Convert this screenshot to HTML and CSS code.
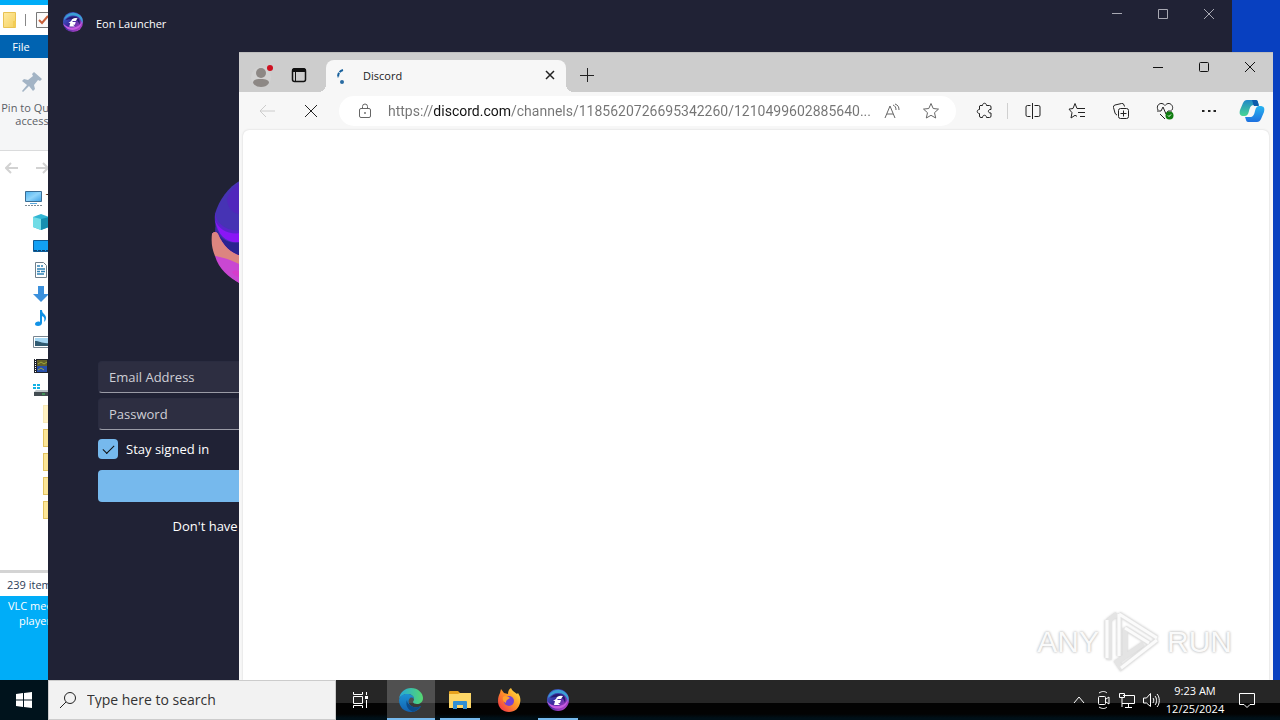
FILE: index.html
```html
<!DOCTYPE html>
<html lang="en">
<head>
    <meta charset="UTF-8">
    <meta name="viewport" content="width=device-width, initial-scale=1.0">
    <title>Desktop</title>
    <link rel="stylesheet" href="styles.css">
</head>
<body>
    <!-- shared gradients and the Eon logo -->
    <svg class="defs" width="0" height="0" aria-hidden="true">
        <defs>
            <linearGradient id="folder" x1="0" y1="0" x2="1" y2="1">
                <stop offset="0" stop-color="#ffeaa0"/><stop offset="1" stop-color="#f5d160"/>
            </linearGradient>
            <linearGradient id="screen" x1="0" y1="0" x2="1" y2="1">
                <stop offset="0" stop-color="#4fb4f0"/><stop offset="0.5" stop-color="#8fd4fa"/><stop offset="1" stop-color="#3ba0e6"/>
            </linearGradient>
            <linearGradient id="eon-ring" x1="0" y1="0" x2="1" y2="1">
                <stop offset="0" stop-color="#3f7fe0"/><stop offset="0.45" stop-color="#3a2a9c"/><stop offset="1" stop-color="#d84bd8"/>
            </linearGradient>
            <symbol id="eon" viewBox="0 0 24 24">
                <circle cx="12" cy="12" r="11" fill="url(#eon-ring)"/>
                <path d="M2 10C4 2 14-1 20 5c3 3 3 6 2 9-1-6-5-9-10-9-4 0-7 2-10 5z" fill="#3a9fd4"/>
                <path d="M1 13c2 6 8 9 14 7 4-1 7-5 7-9-2 5-6 7-10 7s-8-1-11-5z" fill="#c65be0"/>
                <path d="M4 10c3-4 8-5 12-3 3 1 4 4 3 8-1-4-3-6-7-6-3 0-6 0-8 1z" fill="#241a70"/>
                <path d="M8 17l1-4H7l3-2 1-2q3-2 6-1l-2 3h-3l-1 1h4l-1 3h-2l2 2z" fill="#fff"/>
            </symbol>
        </defs>
    </svg>

    <main class="desktop">
        <div class="shortcut">VLC media player</div>

        <!-- File Explorer -->
        <section class="window explorer" aria-label="File Explorer">
            <div class="explorer-title">
                <svg width="14" height="16" viewBox="0 0 14 16"><path d="M.5.5h12v15h-12z" fill="url(#folder)" stroke="#e8c252"/><path d="M10 9h3v6h-3z" fill="#f2cc55"/></svg>
                <span class="divider"></span>
                <svg width="16" height="16" viewBox="0 0 16 16"><path d="M.5.5h14v15H.5z" fill="#fafafa" stroke="#777"/><path d="M3 8l3 3 6-7" fill="none" stroke="#c8603a" stroke-width="2"/></svg>
            </div>
            <div class="explorer-tabs"><button class="file-tab">File</button></div>
            <div class="ribbon">
                <button class="pin-button">
                    <svg width="22" height="22" viewBox="0 0 22 22"><path d="M13 1l8 7-2 2-2-1-4 5 1 4-2 2-4-5-6 6-1-1 5-6-5-4 2-2 4 1 5-4-1-2z" fill="#a3b4c5"/></svg>
                    Pin to Quick access
                </button>
            </div>
            <div class="explorer-nav">
                <svg width="14" height="12" viewBox="0 0 14 12"><path d="M13 6H2M6 1L1 6l5 5" fill="none" stroke="#d2d2d2" stroke-width="2"/></svg>
                <svg width="14" height="12" viewBox="0 0 14 12"><path d="M1 6h11M8 1l5 5-5 5" fill="none" stroke="#d2d2d2" stroke-width="2"/></svg>
            </div>
            <ul class="tree">
                <li class="root"><svg width="17" height="16" viewBox="0 0 17 16"><path d="M.5 1.500h16v10H.5z" fill="url(#screen)" stroke="#3a6d94"/><path d="M5 13.500h7" stroke="#58a8de"/><path d="M0 15.500h17" stroke="#7d8a94" stroke-dasharray="2 1"/></svg>This PC</li>
                <li><svg width="16" height="16" viewBox="0 0 16 16"><path d="M0 3l8-3 8 3v10l-8 3-8-3z" fill="#31b5d3"/><path d="M0 3l8 2v11l-8-3z" fill="#71dce6"/><path d="M8 5l8-2v10l-8 3z" fill="#168fb0"/></svg></li>
                <li><svg width="18" height="12" viewBox="0 0 18 12"><path d="M.5.5h17v11H.5z" fill="#12a0f4" stroke="#0e5b95"/><path d="M1 10.500h14" stroke="#0d4474" stroke-dasharray="3 1"/></svg></li>
                <li><svg width="16" height="16" viewBox="0 0 16 16"><path d="M2.500.5h8l3 3v12h-11z" fill="#fff" stroke="#70808c"/><path d="M4 4h3m1 0h2M4 7h8M4 9.500h3m1 0h4M4 12h7" stroke="#2f82b6" stroke-width="1.500"/></svg></li>
                <li><svg width="16" height="16" viewBox="0 0 16 16"><path d="M5 0h6v8h5l-8 8-8-8h5z" fill="#3b90dc"/></svg></li>
                <li><svg width="16" height="16" viewBox="0 0 16 16"><path d="M7 0h2c0 4 4 4 4 8 0 2-1 3-2 4 1-4 0-5-2-6v7c0 2-2 3-4 3s-3-1-3-2c0-2 3-3 5-2z" fill="#1192e6"/></svg></li>
                <li><svg width="18" height="12" viewBox="0 0 18 12"><path d="M.5.5h17v11H.5z" fill="#fff" stroke="#788590"/><path d="M2 2h15v8H2z" fill="#a7d8f4"/><path d="M2 5c5 0 7 3 15 2v3H2z" fill="#315b72"/></svg></li>
                <li><svg width="16" height="16" viewBox="0 0 16 16"><path d="M1 1h15v14H1z" fill="#20242c"/><path d="M4 2h10v6H4z" fill="#63612a"/><path d="M4 8h10v6H4z" fill="#2850ac"/><path d="M2.500 1v14" stroke="#fff" stroke-dasharray="1 1"/><path d="M5 6l3-2 3 2 3-2M5 12l3-2 3 2" stroke="#a0a83a" fill="none"/></svg></li>
                <li><svg width="18" height="16" viewBox="0 0 18 16"><path d="M0 2h3v2H0zM4 2h3v2H4zM0 5h3v2H0zM4 5h3v2H4z" fill="#14b2e4"/><path d="M3 8h15v2H1z" fill="#bfc5c9"/><path d="M1 10h17v4H1z" fill="#434c52"/><path d="M9 12h3" stroke="#3cd35a"/></svg></li>
                <li class="folder pale"></li>
                <li class="folder"></li>
                <li class="folder"></li>
                <li class="folder"></li>
                <li class="folder"></li>
            </ul>
            <div class="explorer-status">239 items</div>
        </section>

        <!-- Eon Launcher -->
        <section class="window launcher" aria-label="Eon Launcher">
            <header class="launcher-title">
                <svg width="22" height="22"><use href="#eon"/></svg>
                <span class="launcher-name">Eon Launcher</span>
                <div class="window-buttons">
                    <button aria-label="Minimize"><svg width="12" height="12" viewBox="0 0 12 12"><path d="M1 5.500h10"/></svg></button>
                    <button aria-label="Maximize"><svg width="12" height="12" viewBox="0 0 12 12"><path d="M1.500 1.500h9v9h-9z"/></svg></button>
                    <button aria-label="Close"><svg width="12" height="12" viewBox="0 0 12 12"><path d="M1 1l10 10M11 1L1 11"/></svg></button>
                </div>
            </header>
            <form class="login">
                <svg class="logo" width="112" height="112" viewBox="0 0 112 112">
                    <circle cx="56" cy="55" r="52" fill="#3c2a9e"/>
                    <path d="M4 36C8 22 17 9 30 2v66C12 66 2 52 4 36z" fill="#4633b4"/>
                    <path d="M4 32c0 14 12 22 26 20v12C14 66 3 52 4 32z" fill="#5a24cc"/>
                    <path d="M16 20c0 10 6 16 14 16V4c-6 3-11 9-14 16z" fill="#5126bc"/>
                    <path d="M4 42c4 10 14 15 26 13v9C16 66 7 58 4 42z" fill="#8a16f6"/>
                    <path d="M8 58c7 6 14 8 22 6v18C20 77 12 68 8 58z" fill="#2a2390"/>
                    <path d="M1 56c2-3 5-2 6 0 5 12 13 19 23 22v28C12 96 0 78 1 56z" fill="#d63ccb"/>
                    <path d="M1 56c2-3 5-2 6 0 5 12 13 19 23 22v10C18 82 9 80 4 78 1 71 0 64 1 56z" fill="#dc8580"/>
                    <path d="M4 78c7 1 17 4 26 9v8c-4-4-7-3-9-1 2 4 5 4 9 6v6C17 99 8 91 4 78z" fill="#c947d2"/>
                </svg>
                <input class="field" type="email" aria-label="Email Address" placeholder="Email Address">
                <input class="field" type="password" aria-label="Password" placeholder="Password">
                <label class="stay" for="stay"><input type="checkbox" id="stay" checked>Stay signed in</label>
                <button class="login-button" type="button">Login</button>
                <p class="signup">Don't have an account? Sign up</p>
            </form>
        </section>

        <!-- Edge -->
        <section class="window browser" aria-label="Discord - Microsoft Edge">
            <header class="tab-strip">
                <button class="profile" aria-label="Profile"><svg width="24" height="24" viewBox="0 0 24 24"><circle cx="10" cy="14" r="10" fill="#d2d2d2"/><circle cx="10" cy="10" r="5" fill="#8d8885"/><path d="M2 20c0-3 3-4 8-4s8 1 8 4c-2 3-5 4-8 4s-6-1-8-4z" fill="#8d8885"/><circle cx="19" cy="5" r="3" fill="#cf1020"/></svg></button>
                <button class="workspaces" aria-label="Tab actions"><svg width="16" height="16" viewBox="0 0 16 16"><rect x="1.500" y="2" width="13" height="12.500" rx="2" fill="none" stroke="#111" stroke-width="1.500"/><path d="M1 5V3c0-1 1-2 2-2h10c1 0 2 1 2 2v2z" fill="#111"/><path d="M4.500 5v9" stroke="#111"/></svg></button>
                <div class="tab">
                    <svg width="16" height="16" viewBox="0 0 16 16"><path d="M9 2C5 3 4 6 4 10" fill="none" stroke="#17609c" stroke-width="2" stroke-dasharray="4 1"/><circle cx="8" cy="14" r="2" fill="#2a6ca3"/></svg>
                    <span class="tab-title">Discord</span>
                    <button class="tab-close" aria-label="Close tab"><svg width="10" height="10" viewBox="0 0 10 10"><path d="M1 1l8 8M9 1L1 9" stroke="#222" stroke-width="1.500"/></svg></button>
                </div>
                <button class="new-tab" aria-label="New tab"><svg width="14" height="14" viewBox="0 0 14 14"><path d="M7.500 0v14M0 7.500h14" stroke="#222"/></svg></button>
                <div class="window-buttons dark">
                    <button aria-label="Minimize"><svg width="12" height="12" viewBox="0 0 12 12"><path d="M1 6.500h10"/></svg></button>
                    <button aria-label="Maximize"><svg width="12" height="12" viewBox="0 0 12 12"><rect x="1.500" y="1.500" width="9" height="9" rx="1"/></svg></button>
                    <button aria-label="Close"><svg width="12" height="12" viewBox="0 0 12 12"><path d="M1 1l10 10M11 1L1 11"/></svg></button>
                </div>
            </header>
            <div class="toolbar">
                <button class="tool" aria-label="Back"><svg class="faded" width="16" height="16" viewBox="0 0 16 16"><path d="M16 8H1M7 2L1 8l6 6"/></svg></button>
                <button class="tool" aria-label="Stop"><svg width="14" height="14" viewBox="0 0 14 14"><path d="M1 1l12 12M13 1L1 13"/></svg></button>
                <div class="address">
                    <svg width="14" height="16" viewBox="0 0 14 16"><rect x="1.500" y="5.500" width="11" height="9" rx="1.500"/><path d="M4.500 5.500V3.500a2.500 2.500 0 0 1 5 0v2"/><circle cx="7" cy="10" r=".6"/></svg>
                    <input class="url" type="text" aria-label="Address" value="https://discord.com/channels/1185620726695342260/1210499602885640...">
                    <svg width="18" height="16" viewBox="0 0 18 16"><path d="M2 15L7 3l5 12M4 11h6M10 2c2 1 3 2 3 5M12 1c3 1 4 3 4 6"/></svg>
                    <svg width="18" height="18" viewBox="0 0 18 18"><path d="M9 1.500l2.200 5 5.300.6-4 3.600 1.200 5.300L9 13.300 4.300 16l1.200-5.300-4-3.600 5.300-.6z"/></svg>
                </div>
                <button class="tool" aria-label="Extensions"><svg width="18" height="18" viewBox="0 0 18 18"><path d="M4 3.500h2.500c0-3 4-3 4 0h3q1.500 0 1.500 1.500v2.500c-3.500-.5-3.500 4 0 3.500V14q0 1.500-1.500 1.500h-3c0-3-4-3-4 0H5q-1.500 0-1.500-1.500v-2.500c-3 0-3-4 0-4V4z"/></svg></button>
                <span class="tool-divider"></span>
                <button class="tool" aria-label="Split screen"><svg width="18" height="18" viewBox="0 0 18 18"><path d="M6.500 3.500h-3q-1.500 0-1.500 1.500v8q0 1.500 1.500 1.500h3M10.500 3.500h4q1.500 0 1.500 1.500v8q0 1.500-1.500 1.500h-4M8.500 1v16"/></svg></button>
                <button class="tool" aria-label="Favorites"><svg width="18" height="18" viewBox="0 0 18 18"><path d="M9 6.500L7 1.500l-2 5-4 .6 3 3.600-1 5.300 4-2.700 2 1M9 6.500h8M10 10.500h7M12 14.500h5"/></svg></button>
                <button class="tool" aria-label="Collections"><svg width="18" height="18" viewBox="0 0 18 18"><rect x="6.500" y="6.500" width="10" height="10" rx="2"/><path d="M11.500 8.500v6M8.500 11.500h6M5 13q-1.500-.5-2-2L1.500 5.500q-.5-2 1.500-2.500l6.500-1.500q2-.5 2.500 1.500l.5 1.500"/></svg></button>
                <button class="tool" aria-label="Browser essentials"><svg width="18" height="18" viewBox="0 0 18 18"><path d="M2 8C0 4 3 1 6 1.500c2 .5 3 2 3 2s1-1.500 3-2c3-.5 6 3 4 6.500M1 9h4l2-4 3 7 2-3h4M4 12l5 5"/><circle class="badge" cx="13.500" cy="13.500" r="4"/><path class="badge-tick" d="M12 13.500l1 1 2-2"/></svg></button>
                <button class="tool" aria-label="Settings and more"><svg width="16" height="16" viewBox="0 0 16 16"><path d="M1 8h2.500M7 8h2.500M12.500 8H15" stroke-width="2"/></svg></button>
                <button class="copilot" aria-label="Copilot">
                    <svg width="26" height="24" viewBox="0 0 26 24">
                        <defs>
                            <linearGradient id="cp1" x1="0" y1="0" x2="0" y2="1"><stop offset="0" stop-color="#2187c8"/><stop offset="1" stop-color="#47d694"/></linearGradient>
                            <linearGradient id="cp2" x1="0" y1="0" x2="0" y2="1"><stop offset="0" stop-color="#28b4f0"/><stop offset="1" stop-color="#1e70df"/></linearGradient>
                        </defs>
                        <path d="M8 1h9c2 0 2 3 3 5h-5c-3 0-4 2-5 6-1 4-2 5-5 5-4 0-5-2-4-6l3-7c1-2 2-3 4-3z" fill="url(#cp1)"/>
                        <path d="M18 23H9c-2 0-2-3-3-5h5c3 0 4-2 5-6 1-4 2-5 5-5 4 0 5 2 4 6l-3 7c-1 2-2 3-4 3z" fill="url(#cp2)"/>
                        <path d="M13 1h4c2 0 2 3 3 6h-5c-1-1-1-4-2-6z" fill="#0d5cac"/>
                    </svg>
                </button>
            </div>
            <div class="page"></div>
        </section>

        <div class="watermark">
            <span>ANY</span>
            <svg width="60" height="64" viewBox="0 0 60 64"><path d="M16 4v42M4 10v38M16 4l38 24M22 18l24 15M6 50V10l8-6M54 30L18 58l-4-6 26-18M22 18v28" fill="none" stroke="#e4e4e4" stroke-width="5"/><path d="M16 4v42M4 10v38M16 4l38 24M22 18l24 15M54 30L18 58" fill="none" stroke="#fbfbfb" stroke-width="3"/></svg>
            <span>RUN</span>
        </div>
    </main>

    <footer class="taskbar">
        <button class="start" aria-label="Start"><svg width="16" height="16" viewBox="0 0 16 16"><path d="M0 2l7-1v6.500H0zM8 1l8-1v7.500H8zM0 8.500h7V15l-7-1zM8 8.500h8V16l-8-1z" fill="#fff"/></svg></button>
        <div class="search">
            <svg width="18" height="18" viewBox="0 0 18 18"><circle cx="11" cy="7" r="5.500"/><path d="M7 11l-6 6"/></svg>
            <input type="text" aria-label="Search" placeholder="Type here to search">
        </div>
        <nav class="apps">
            <button class="task-view" aria-label="Task View"><svg width="18" height="18" viewBox="0 0 18 18" fill="none" stroke="#fff"><path d="M2.500 1v2.500h9V1M2.500 5.500h9v7h-9zM2.500 17v-2.500h9V17M15.500 1v3M15.500 9v8"/><path d="M14 5h3v3h-3z" fill="#fff" stroke="none"/></svg></button>
            <button class="running active" aria-label="Microsoft Edge">
                <svg width="24" height="24" viewBox="0 0 24 24">
                    <defs>
                        <linearGradient id="edge1"><stop offset="0" stop-color="#23a8dc"/><stop offset="1" stop-color="#55d870"/></linearGradient>
                        <linearGradient id="edge2" x1="0" y1="0" x2="0" y2="1"><stop offset="0" stop-color="#1c93d4"/><stop offset="1" stop-color="#1261b0"/></linearGradient>
                    </defs>
                    <path d="M0 11C1 4 6 0 12 0c7 0 12 5 12 10 0 4-3 6-6 6-2 0-4-1-4-2 0-1 1-1 1-3 0-3-3-5-6-5-4 0-8 2-9 5z" fill="url(#edge1)"/>
                    <path d="M0 12c1-4 4-6 8-6 4 0 7 2 7 5-1-1-2-2-4-1-2 2-2 5 0 7 3 3 7 3 11 1-2 4-6 6-10 6C5 24 0 19 0 12z" fill="url(#edge2)"/>
                    <path d="M8 12c-2 5 1 10 6 12 3-1 6-3 8-6-4 2-8 2-11-1-2-1-3-3-3-5z" fill="#0d4b88"/>
                </svg>
            </button>
            <button class="running" aria-label="File Explorer"><svg width="22" height="18" viewBox="0 0 22 18"><path d="M0 1q0-1 1-1h8l2 2h10q1 0 1 1v14H0z" fill="#e6a21e"/><path d="M0 3h9l2-1h11v15H0z" fill="#fcd667"/><path d="M4 18v-7q0-1 1-1h12q1 0 1 1v7h-4v-4H8v4z" fill="#2f8fd3"/></svg></button>
            <button aria-label="Firefox">
                <svg width="24" height="24" viewBox="0 0 24 24">
                    <defs><linearGradient id="fox" x1="1" y1="0" x2="0" y2="1"><stop offset="0" stop-color="#fff04a"/><stop offset="0.45" stop-color="#ff9826"/><stop offset="1" stop-color="#f0244e"/></linearGradient></defs>
                    <path d="M3 5l1-4 3 4 4 1c0-3 1-5 3-6 1 3 4 4 6 6l1-1c2 3 3 6 2 10-1 5-5 9-11 9S1 20 1 13c0-4 1-6 2-8z" fill="url(#fox)"/>
                    <circle cx="12" cy="13" r="5" fill="#7442d2"/>
                    <path d="M6 9c2-2 5-1 7 1l-3 2c-1 1-1 2-1 3-2-1-4-3-3-6z" fill="#ffa02d"/>
                </svg>
            </button>
            <button class="running" aria-label="Eon Launcher"><svg width="24" height="24"><use href="#eon"/></svg></button>
        </nav>
        <div class="tray">
            <svg width="24" height="18" viewBox="0 0 24 18"><path d="M7 12l5-6 5 6"/></svg>
            <svg width="24" height="18" viewBox="0 0 24 18"><rect x="7.500" y="5.500" width="7" height="8" rx="1"/><path d="M15 8l3-2v7l-3-2M8 2c3-2 6-2 8 0M8 16c3 2 6 2 8 0"/></svg>
            <svg width="24" height="18" viewBox="0 0 24 18"><path d="M8 4.500h11.500v8H7M13.500 12.500v4M10 16.500h7M4.500 2.500h5v4h-5zM7 7v9"/></svg>
            <svg width="24" height="18" viewBox="0 0 24 18"><path d="M4.500 7v5h3l4 3.500v-13L7.500 7zM14 7c1 1 1 3 0 5M16 5c2 2 2 7 0 9M18 3c3 3 3 10 0 13"/></svg>
            <div class="clock"><span>9:23 AM</span><span>12/25/2024</span></div>
            <button aria-label="Notifications"><svg width="18" height="18" viewBox="0 0 18 18"><path d="M1.500 2.500h15v11H12l-3 3-3-3H1.500z"/></svg></button>
        </div>
    </footer>
</body>
</html>
```
FILE: styles.css
```css
* {
    box-sizing: border-box;
}

body {
    margin: 0;
    height: 100vh;
    display: flex;
    flex-direction: column;
    overflow: hidden;
    font-family: "Open Sans", "Noto Sans", sans-serif;
    font-size: 11px;
    line-height: 16px;
}

button,
input {
    font: inherit;
    color: inherit;
    border: 0;
    padding: 0;
    background: none;
}

svg {
    flex: none;
}

.defs {
    position: absolute;
}

.desktop {
    position: relative;
    flex: 1;
    overflow: hidden;
    background: linear-gradient(90deg, #00adf8 0, #00adf8 10%, #0840c0 90%);
}

.shortcut {
    position: absolute;
    left: 0;
    bottom: 52px;
    width: 70px;
    color: #fff;
    line-height: 15px;
    text-align: center;
}

.window {
    position: absolute;
    display: flex;
    flex-direction: column;
}

/* File Explorer */
.explorer {
    top: 5px;
    left: 0;
    width: 50%;
    bottom: 84px;
    background: #fff;
    color: #5b6066;
}

.explorer-title {
    display: flex;
    align-items: center;
    height: 30px;
    gap: 8px;
    padding-left: 3px;
}

.divider {
    width: 1px;
    height: 12px;
    margin-right: 2px;
    background: #888;
}

.explorer-tabs {
    background: #0063b1;
}

.file-tab {
    width: 42px;
    height: 23px;
    color: #fff;
}

.ribbon {
    height: 93px;
    padding-top: 13px;
    background: #f5f6f7;
    border-bottom: 1px solid #dadbdc;
}

.pin-button {
    display: flex;
    flex-direction: column;
    align-items: center;
    gap: 8px;
    width: 64px;
    line-height: 13px;
}

.explorer-nav {
    display: flex;
    align-items: center;
    gap: 16px;
    height: 34px;
    padding-left: 5px;
}

.tree {
    flex: 1;
    margin: 0;
    padding: 1px 0 0;
    list-style: none;
}

.tree li {
    display: flex;
    align-items: center;
    height: 24px;
    padding-left: 33px;
    color: #000;
}

.tree .root {
    gap: 4px;
    padding-left: 25px;
}

.tree .folder {
    padding-left: 43px;
}

.folder::before {
    content: "";
    width: 16px;
    height: 16px;
    border: 1px solid #e2c360;
    background: #fbe597;
}

.folder.pale::before {
    border-color: #f6e7b5;
    background: #fff1c2;
}

.explorer-status {
    height: 26px;
    padding: 4px 7px;
    border-top: 3px solid #d4d4d4;
    color: #2b3c58;
}

/* Eon Launcher */
.launcher {
    top: 0;
    left: 48px;
    right: 48px;
    bottom: 0;
    background: #202235;
    color: #fff;
}

.launcher-title {
    display: flex;
    align-items: center;
    height: 44px;
    padding-left: 14px;
}

.launcher-name {
    flex: 1;
    padding: 4px 0 0 12px;
}

.window-buttons {
    align-self: flex-start;
    display: flex;
}

.window-buttons button {
    display: flex;
    align-items: center;
    justify-content: center;
    width: 46px;
    height: 28px;
}

.window-buttons svg {
    fill: none;
    stroke: #a8a9b3;
}

.window-buttons.dark svg {
    stroke: #111;
}

.login {
    display: flex;
    flex-direction: column;
    width: 438px;
    padding: 134px 50px 0;
    font-size: 13px;
}

.logo {
    align-self: center;
    margin-bottom: 71px;
}

.field {
    height: 32px;
    margin-bottom: 5px;
    padding: 0 10px;
    border: 1px solid #2a2c40;
    border-bottom-color: #9a9ba6;
    border-radius: 4px;
    background: #2d2e41;
}

.field::placeholder {
    color: #cfcfd6;
}

.stay {
    display: flex;
    align-items: center;
    gap: 8px;
    margin: 4px 0 11px;
}

.stay input {
    appearance: none;
    width: 20px;
    height: 20px;
    margin: 0;
    border-radius: 4px;
    background: #76b9ed;
}

.stay input:checked::before {
    content: "";
    display: block;
    width: 10px;
    height: 5px;
    margin: 6px 5px;
    border-left: 1px solid #111;
    border-bottom: 1px solid #111;
    transform: rotate(-45deg);
}

.login-button {
    height: 32px;
    border-radius: 4px;
    background: #76b9ed;
    color: #111;
}

.signup {
    margin: 16px 0;
    text-align: center;
}

/* Edge */
.browser {
    top: 52px;
    left: 239px;
    right: 7px;
    bottom: 0;
    background: #f7f7f7;
    color: #222;
}

.tab-strip {
    display: flex;
    height: 40px;
    background: #cdcdcd;
    border-top: 1px solid #bdbdbd;
}

.profile {
    width: 44px;
    padding: 8px 0 0 3px;
}

.workspaces {
    width: 32px;
    padding-top: 8px;
}

.tab {
    position: relative;
    display: flex;
    align-items: center;
    width: 240px;
    margin: 7px 0 0 11px;
    padding: 0 11px 0 8px;
    border-radius: 8px 8px 0 0;
    background: #f7f7f7;
}

.tab::before,
.tab::after {
    content: "";
    position: absolute;
    bottom: 0;
    width: 8px;
    height: 8px;
}

.tab::before {
    right: 100%;
    background: radial-gradient(circle at 0 0, transparent 8px, #f7f7f7 8px);
}

.tab::after {
    left: 100%;
    background: radial-gradient(circle at 100% 0, transparent 8px, #f7f7f7 8px);
}

.tab-title {
    flex: 1;
    padding-left: 13px;
}

.new-tab {
    width: 42px;
    padding-top: 8px;
}

.tab-strip .window-buttons {
    margin-left: auto;
}

.toolbar {
    display: flex;
    align-items: center;
    height: 37px;
    padding-left: 6px;
}

.tool {
    display: flex;
    align-items: center;
    justify-content: center;
    width: 44px;
    height: 32px;
}

.toolbar svg {
    fill: none;
    stroke: #222;
}

.toolbar .faded {
    stroke: #ccc;
}

.tool .badge {
    fill: #107c10;
    stroke: none;
}

.tool .badge-tick {
    stroke: #fff;
}

.address {
    flex: 1;
    display: flex;
    align-items: center;
    height: 30px;
    margin: 0 7px 0 6px;
    padding: 0 16px 0 19px;
    border-radius: 15px;
    background: #fff;
}

.toolbar .address svg {
    stroke: #666;
}

.address svg + svg {
    margin-left: 21px;
}

/* the host name is darker than the rest of the address */
.url {
    flex: 1;
    min-width: 0;
    margin: 0 12px 0 16px;
    font-family: Roboto, sans-serif;
    font-size: 14px;
    background: linear-gradient(90deg, #747474 45px, #111 45px, #111 123px, #747474 123px);
    background-clip: text;
    -webkit-background-clip: text;
    -webkit-text-fill-color: transparent;
}

.tool-divider {
    width: 1px;
    height: 16px;
    margin-right: 3px;
    background: #d0d0d0;
}

.copilot {
    width: 42px;
    height: 32px;
}

.toolbar .copilot svg {
    display: block;
    margin: 0 auto;
    stroke: none;
}

.page {
    flex: 1;
    margin: 1px 4px 0;
    border-radius: 6px 6px 0 0;
    background: #fff;
    box-shadow: 0 0 2px #ccc;
}

.watermark {
    position: absolute;
    right: 48px;
    bottom: 6px;
    display: flex;
    align-items: center;
    gap: 4px;
    color: #fafafa;
    font: 30px "Liberation Sans Narrow", "Liberation Sans", sans-serif;
    text-shadow: 0 0 3px #bbb, 0 0 2px #ccc;
}

.watermark svg {
    filter: drop-shadow(0 0 1px #ccc);
}

/* Taskbar */
.taskbar {
    display: flex;
    height: 40px;
    background: linear-gradient(#262626 23px, #030303 23px, #030303 34px, #001018 38px);
    color: #fff;
}

.start {
    display: flex;
    align-items: center;
    justify-content: center;
    width: 48px;
    background: #00131c;
}

.search {
    display: flex;
    align-items: center;
    width: 288px;
    padding: 0 10px;
    gap: 10px;
    border: 1px solid #ccc;
    background: #f2f2f2;
    color: #333;
    font-size: 14px;
}

.search svg {
    fill: none;
    stroke: #222;
}

.search input {
    flex: 1;
    min-width: 0;
}

.search input::placeholder {
    color: #333;
}

.apps {
    display: flex;
    flex: 1;
    gap: 1px;
}

.apps button {
    display: flex;
    align-items: center;
    justify-content: center;
    width: 48px;
}

.apps .task-view {
    margin-right: 2px;
}

.apps .running {
    background: linear-gradient(#76b9ed, #76b9ed) bottom / 40px 2px no-repeat;
}

.apps .active {
    background: linear-gradient(#505050 23px, #383838 23px, #383838 38px, #76b9ed 38px);
}

.tray {
    display: flex;
    align-items: center;
}

.tray svg {
    display: block;
    fill: none;
    stroke: #fff;
}

.clock {
    display: flex;
    flex-direction: column;
    align-items: center;
    width: 64px;
    line-height: 18px;
}

.tray button {
    display: flex;
    justify-content: center;
    width: 40px;
    margin-right: 13px;
}
```
